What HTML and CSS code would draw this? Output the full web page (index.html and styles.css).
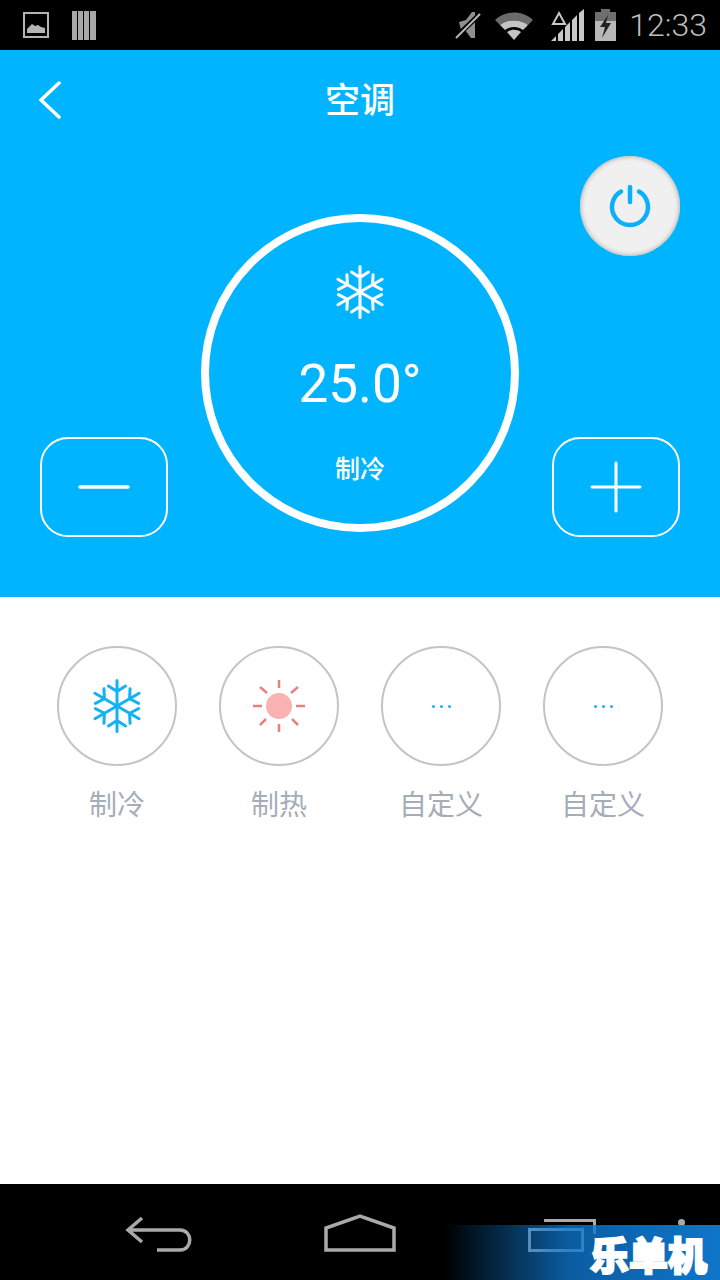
FILE: index.html
```html
<!DOCTYPE html>
<html lang="zh-CN">
  <head>
    <meta charset="UTF-8" />
    <title>空调</title>
    <link rel="stylesheet" href="styles.css">
  </head>

  <body>
    <svg class="defs" width="0" height="0">
      <symbol id="flake" viewBox="0 0 50 54">
        <g fill="none" stroke="currentColor" stroke-width="3" stroke-linecap="round" stroke-linejoin="round">
          <path d="M25 27V1.500M25 12.500L16.500 7M25 12.500L33.500 7" />
          <path d="M25 27V1.500M25 12.500L16.500 7M25 12.500L33.500 7" transform="rotate(60 25 27)" />
          <path d="M25 27V1.500M25 12.500L16.500 7M25 12.500L33.500 7" transform="rotate(120 25 27)" />
          <path d="M25 27V1.500M25 12.500L16.500 7M25 12.500L33.500 7" transform="rotate(180 25 27)" />
          <path d="M25 27V1.500M25 12.500L16.500 7M25 12.500L33.500 7" transform="rotate(240 25 27)" />
          <path d="M25 27V1.500M25 12.500L16.500 7M25 12.500L33.500 7" transform="rotate(300 25 27)" />
        </g>
      </symbol>
    </svg>

    <div class="status-bar">
      <div class="status-left">
        <svg class="icon-pic" viewBox="0 0 26 26">
          <rect x="1" y="1" width="24" height="24" fill="none" stroke="#b4b4b4" stroke-width="2" />
          <path d="M4 21V17L9 12L12 14L15 13L18 15L22 16V21Z" fill="#b4b4b4" />
        </svg>
        <svg class="icon-bars" viewBox="0 0 24 30">
          <path d="M0 1H5V30H0ZM6 1H11V30H6ZM12 1H17V30H12ZM18 1H24V30H18Z" fill="#a8a8a8" />
        </svg>
      </div>
      <div class="status-right">
        <svg class="icon-mute" viewBox="0 0 28 28">
          <path d="M5 11L12 9L18 1H21V27L17 27L11 19L7 19Z" fill="#8f8f8f" />
          <path d="M2 26L26 3" stroke="#000" stroke-width="5" />
          <path d="M2 27L26 3" stroke="#b8b8b8" stroke-width="2" />
        </svg>
        <svg class="icon-wifi" viewBox="0 0 38 30">
          <path d="M0 10C10 0 28 0 38 10L33 15C26 9 12 9 5 15Z" fill="#6b6b6b" />
          <path d="M5 15C12 9 26 9 33 15L28 20C23 16 15 16 10 20Z" fill="#c4c4c4" />
          <path d="M12 22C16 19 22 19 26 22L19 30Z" fill="#c4c4c4" />
        </svg>
        <svg class="icon-signal" viewBox="0 0 35 32">
          <path d="M3 15L9 4L15 15Z" fill="none" stroke="#c8c8c8" stroke-width="2" />
          <path d="M1 32L6 27V32ZM8 32V25L13 20V32ZM15 32V18L20 13V32ZM22 32V11L27 6V32ZM29 32V4L34 0V32Z" fill="#c8c8c8" />
        </svg>
        <svg class="icon-battery" viewBox="0 0 21 32">
          <path d="M6 0H15V3H6Z" fill="#6f6f6f" />
          <path d="M0 3H21V12H0Z" fill="#6f6f6f" />
          <path d="M0 12H21V32H0Z" fill="#b8b8b8" />
          <path d="M13 6L5 18H10L7 29L16 14H11Z" fill="#222" />
        </svg>
        <span class="clock">12:33</span>
      </div>
    </div>

    <main class="panel">
      <header class="title-bar">
        <svg class="back" viewBox="0 0 22 38">
          <path d="M20 2L2 19L20 36" fill="none" stroke="#fff" stroke-width="3.500" stroke-linecap="round" stroke-linejoin="round" />
        </svg>
        <h1 class="title">空调</h1>
      </header>

      <div class="stage">
        <button class="step">
          <svg viewBox="0 0 52 52"><path d="M2 26H50" stroke="#fff" stroke-width="3.500" stroke-linecap="round" /></svg>
        </button>

        <div class="dial">
          <svg class="dial-flake"><use href="#flake" /></svg>
          <div class="temp">25.0°</div>
          <div class="dial-mode">制冷</div>
        </div>

        <div class="side">
          <button class="power">
            <svg viewBox="0 0 44 44">
              <path d="M13 7.500A18 18 0 1 0 31 7.500" fill="none" stroke="#0cb0fa" stroke-width="4.500" stroke-linecap="round" />
              <path d="M22 3V18" stroke="#0cb0fa" stroke-width="4.500" stroke-linecap="round" />
            </svg>
          </button>
          <button class="step">
            <svg viewBox="0 0 52 52"><path d="M2 26H50M26 2V50" stroke="#fff" stroke-width="3" stroke-linecap="round" /></svg>
          </button>
        </div>
      </div>
    </main>

    <section class="modes">
      <div class="mode">
        <div class="ring">
          <svg class="mode-flake"><use href="#flake" /></svg>
        </div>
        <div class="mode-name">制冷</div>
      </div>
      <div class="mode">
        <div class="ring">
          <svg class="sun" viewBox="0 0 56 56">
            <circle cx="28" cy="28" r="13" fill="#f9b1b1" />
            <path d="M28 2V10M28 46V54M2 28H11M45 28H54M9 9L16 15M47 9L40 15M9 47L15 41M47 47L41 41" stroke="#e98080" stroke-width="2.500" />
          </svg>
        </div>
        <div class="mode-name">制热</div>
      </div>
      <div class="mode">
        <div class="ring"><span class="dot"></span><span class="dot"></span><span class="dot"></span></div>
        <div class="mode-name">自定义</div>
      </div>
      <div class="mode">
        <div class="ring"><span class="dot"></span><span class="dot"></span><span class="dot"></span></div>
        <div class="mode-name">自定义</div>
      </div>
    </section>

    <nav class="nav-bar">
      <svg class="nav-cell" viewBox="0 0 200 96">
        <path d="M82 34L68 46L82 58M68 46H120C133 46 133 66 120 66H97" fill="none" stroke="#aaa" stroke-width="3.500" />
      </svg>
      <svg class="nav-cell" viewBox="0 0 200 96">
        <path d="M66 66V44L100 32L134 44V66Z" fill="none" stroke="#aaa" stroke-width="3.500" />
      </svg>
      <svg class="nav-cell" viewBox="0 0 200 96">
        <path d="M84 36.500H134.500V50" fill="none" stroke="#aaa" stroke-width="3" />
        <rect x="69.500" y="45.500" width="53" height="21" fill="none" stroke="#aaa" stroke-width="3" />
      </svg>
      <div class="menu-dot"></div>
    </nav>

    <div class="watermark">乐单机</div>
  </body>
</html>
```

FILE: styles.css
```css
* {
  margin: 0;
  padding: 0;
  box-sizing: border-box;
}

html,
body {
  width: 720px;
  height: 1280px;
  overflow: hidden;
}

body {
  position: relative;
  display: flex;
  flex-direction: column;
  background-color: #fff;
  font-family: "Noto Sans CJK SC", "Noto Sans", sans-serif;
}

button {
  background: none;
  border: none;
}

svg {
  display: block;
}

.defs {
  position: absolute;
}

/* status bar */
.status-bar {
  display: flex;
  justify-content: space-between;
  align-items: center;
  height: 50px;
  padding: 0 13px 0 23px;
  background-color: #000;
}

.status-left,
.status-right {
  display: flex;
  align-items: center;
}

.icon-pic {
  width: 26px;
  height: 26px;
}

.icon-bars {
  width: 24px;
  height: 30px;
  margin-left: 23px;
}

.icon-mute {
  width: 28px;
  height: 28px;
}

.icon-wifi {
  width: 38px;
  height: 30px;
  margin-left: 13px;
}

.icon-signal {
  width: 35px;
  height: 32px;
  margin-left: 17px;
}

.icon-battery {
  width: 21px;
  height: 32px;
  margin-left: 10px;
}

.clock {
  margin-left: 13px;
  font-family: Roboto, sans-serif;
  font-size: 32px;
  font-weight: 300;
  line-height: 50px;
  color: #bdbdbd;
}

/* blue panel */
.panel {
  height: 547px;
  background-color: #00b4ff;
}

.title-bar {
  position: relative;
  display: flex;
  justify-content: center;
  align-items: center;
  height: 100px;
}

.back {
  position: absolute;
  left: 39px;
  top: 31px;
  width: 22px;
  height: 38px;
}

.title {
  margin-top: -6px;
  font-size: 35px;
  font-weight: 500;
  color: #fff;
}

.stage {
  display: grid;
  grid-template-columns: 128px 1fr 128px;
  height: 447px;
  padding: 6px 40px 60px;
}

.step {
  display: flex;
  justify-content: center;
  align-items: center;
  width: 128px;
  height: 100px;
  align-self: end;
  border: 2px solid #fff;
  border-radius: 28px;
}

.step svg {
  width: 52px;
  height: 52px;
}

.dial {
  display: flex;
  flex-direction: column;
  align-items: center;
  justify-self: center;
  width: 318px;
  height: 318px;
  margin-top: 58px;
  padding-top: 43px;
  border: 8px solid #fff;
  border-radius: 50%;
  color: #fff;
}

.dial-flake,
.mode-flake {
  width: 50px;
  height: 54px;
}

.temp {
  margin-top: 33px;
  font-family: Roboto, sans-serif;
  font-size: 53px;
  line-height: 64px;
}

.dial-mode {
  margin-top: 36px;
  font-size: 25px;
  font-weight: 500;
  line-height: 30px;
}

.side {
  display: flex;
  flex-direction: column;
  justify-content: space-between;
  align-items: flex-end;
}

.power {
  display: flex;
  justify-content: center;
  align-items: center;
  width: 100px;
  height: 100px;
  border-radius: 50%;
  background-color: #f1f0f0;
  box-shadow: inset 0 0 4px 1px #b9b6b4;
}

.power svg {
  width: 44px;
  height: 44px;
}

/* modes */
.modes {
  display: grid;
  grid-template-columns: repeat(4, 162px);
  flex: 1;
  align-content: start;
  padding: 49px 36px 0;
}

.mode {
  display: flex;
  flex-direction: column;
  align-items: center;
}

.ring {
  display: flex;
  justify-content: center;
  align-items: center;
  gap: 5px;
  width: 120px;
  height: 120px;
  border: 2px solid #c2c4c8;
  border-radius: 50%;
}

.mode-flake {
  color: #12b2f5;
}

.sun {
  width: 56px;
  height: 56px;
}

.dot {
  width: 3px;
  height: 3px;
  background-color: #12b2f5;
  border-radius: 50%;
}

.mode-name {
  margin-top: 17px;
  font-size: 28px;
  line-height: 40px;
  color: #a5adb8;
}

/* nav bar */
.nav-bar {
  display: grid;
  grid-template-columns: repeat(3, 200px) 60px;
  height: 96px;
  padding-left: 60px;
  background-color: #000;
}

.nav-cell {
  width: 200px;
  height: 96px;
}

.menu-dot {
  width: 7px;
  height: 7px;
  margin: 35px 0 0 18px;
  background-color: #aaa;
  border-radius: 50%;
}

/* watermark over the nav bar */
.watermark {
  position: absolute;
  left: 445px;
  bottom: 0;
  width: 275px;
  height: 55px;
  padding: 2px 13px 0 0;
  background: linear-gradient(to right, rgba(12, 110, 200, 0), rgba(14, 118, 205, 0.78) 45%, rgba(16, 128, 220, 0.92));
  text-align: right;
  font-size: 39px;
  font-weight: 900;
  line-height: 53px;
  color: #fff;
  -webkit-text-stroke: 2px #fff;
}
```
